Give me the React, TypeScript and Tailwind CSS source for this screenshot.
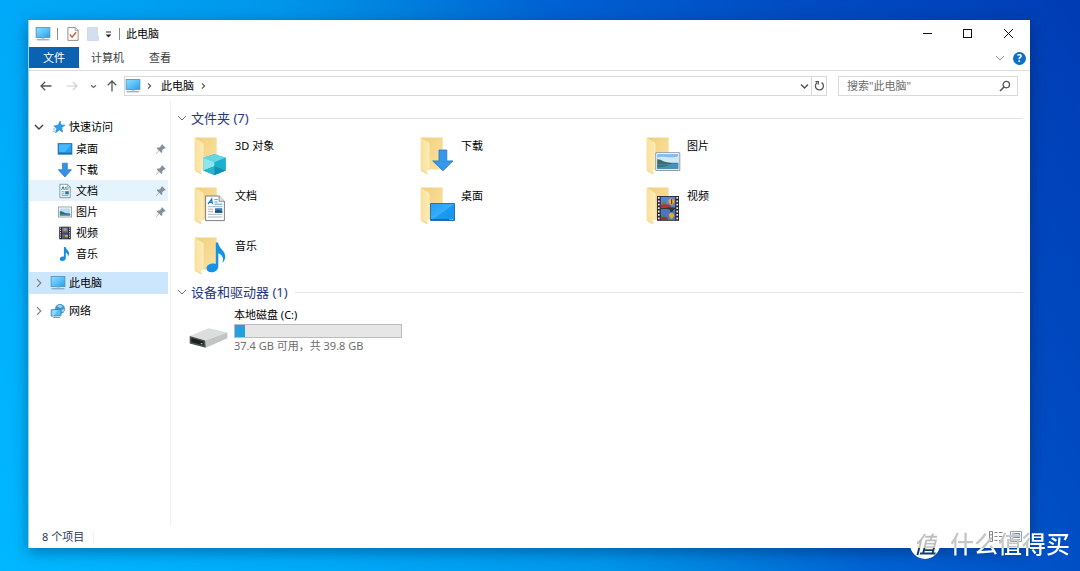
import type { ReactNode } from "react";

/* ---------- icons ---------- */

function MonitorIcon() {
  return (
    <svg width="16" height="14" viewBox="0 0 16 14" aria-hidden="true">
      <defs>
        <linearGradient id="screen" x1="0" y1="0" x2="1" y2="1">
          <stop offset="0" stopColor="#8fdcff" />
          <stop offset="0.5" stopColor="#5cc2f8" />
          <stop offset="1" stopColor="#2b9ee8" />
        </linearGradient>
      </defs>
      <rect x="1.1" y="0.6" width="13.8" height="9.8" fill="url(#screen)" stroke="#4a8db8" strokeWidth="0.8" />
      <path d="M6.5 10.8h3.4v.9H6.5z" fill="#9fb9c8" />
      <path d="M1.6 12.8h12.8" stroke="#7894a6" strokeWidth="1" />
    </svg>
  );
}

function StarIcon() {
  return (
    <svg width="14" height="14" viewBox="0 0 14 14" aria-hidden="true">
      <path d="M8.2 1l.8 3.9 4 .3-3.3 2.4.8 4.4-3.2-2.1-3.7 2.9 1.2-4.3L2 6l4.1-.7z" fill="#2c9ceb" stroke="#1b7fca" strokeWidth="0.6" />
      <path d="M.8 9.2l2.6-.4M.6 11.8l2.8-1.2" stroke="#5cb4ef" strokeWidth="0.9" />
    </svg>
  );
}

function DesktopIcon() {
  return (
    <svg width="16" height="14" viewBox="0 0 16 14" aria-hidden="true">
      <rect x="1.2" y="1.7" width="13.6" height="10.4" fill="#27a0f3" stroke="#1468ad" />
      <path d="M2 2.2h12.2L8 10H2z" fill="#49b5fa" />
      <path d="M2 11.2h12.2" stroke="#145f9f" strokeWidth="0.9" />
    </svg>
  );
}

function DownloadIcon() {
  return (
    <svg width="16" height="16" viewBox="0 0 16 16" aria-hidden="true">
      <path d="M5.5 1.2h4.8v6.5h4.2L7.9 15 1.3 7.7h4.2z" fill="#3592e4" stroke="#2773bd" strokeWidth="0.7" />
    </svg>
  );
}

function DocumentIcon() {
  return (
    <svg width="16" height="16" viewBox="0 0 16 16" aria-hidden="true">
      <path d="M2.9 1.3h7.6l2.7 2.7v10.7H2.9z" fill="#fafcfd" stroke="#71828c" strokeWidth="0.8" />
      <path d="M10.3 1.3v2.9h2.9" fill="none" stroke="#71828c" strokeWidth="0.7" />
      <path d="M4.6 7l1.5-3.4L7.3 7M8 4.4h1.5M8 6h3.6" stroke="#1c83b9" fill="none" />
      <path d="M4.5 8.8h3M4.5 10.8h3M4.5 12.7h7" stroke="#4d9bbd" strokeWidth="0.9" />
      <path d="M8.2 8.2h3.6v3.2H8.2z" fill="#267a9e" />
    </svg>
  );
}

function PictureIcon() {
  return (
    <svg width="16" height="14" viewBox="0 0 16 14" aria-hidden="true">
      <rect x="1.4" y="2" width="13.2" height="10" fill="#fff" stroke="#858e96" strokeWidth="0.8" />
      <path d="M2.8 3.4h10.4v7.2H2.8z" fill="#b9dcf3" />
      <path d="M2.8 6l3 .8 2.3 1.3 5.1.4v2.1H2.8z" fill="#346c74" />
      <path d="M2.8 9.4h10.4v1.2H2.8z" fill="#4f91bf" />
    </svg>
  );
}

function VideoIcon() {
  return (
    <svg width="16" height="16" viewBox="0 0 16 16" aria-hidden="true">
      <path d="M2.2 1.7h11.6v12.6H2.2z" fill="#292a31" />
      <path d="M5 2.5h6v5.2H5z" fill="#5577b1" />
      <path d="M5 8.4h6v5.2H5z" fill="#466294" />
      <path d="M3.5 2.5v11M12.5 2.5v11" stroke="#d9dce3" strokeWidth="1" strokeDasharray="1.2 1.1" />
      <path d="M6.5 3.5h3v2h-3zM8 10h3v2H8z" fill="#d1a83c" />
      <path d="M5 6.5h2.6v1.2H5zM5 11.7h3V13H5z" fill="#a3463a" />
    </svg>
  );
}

function MusicIcon() {
  return (
    <svg width="16" height="16" viewBox="0 0 16 16" aria-hidden="true">
      <path d="M6.9 1h1.7c.3 2.4 3.8 3.6 3.4 7-.1 1.2-.6 2-1.2 2.7.3-2.1-.4-3.3-2-4v5.6c0 3.2-6 3.9-6 .7 0-2.1 2.2-3 4.1-2.4z" fill="#178fe1" />
    </svg>
  );
}

function NetworkIcon() {
  return (
    <svg width="16" height="16" viewBox="0 0 16 16" aria-hidden="true">
      <circle cx="10" cy="6" r="5" fill="#4596c8" />
      <path d="M7 3.2c2-2 4.5-1.4 5.8.3L10.3 5 8.6 4.2zM11 7l3.6-1.2-.9 2.7-2 .8z" fill="#a1d4e8" />
      <path d="M1.2 6.8l9.8-.6v6.6l-9.8.3z" fill="#54bdf4" stroke="#267fb8" strokeWidth="0.8" />
      <path d="M1.8 7.4l6-.4L4 12.4l-2.2.1z" fill="#8bdafc" />
      <path d="M3.3 14.5h6.6" stroke="#5f91ad" strokeWidth="0.9" />
    </svg>
  );
}

function PinIcon() {
  return (
    <svg width="12" height="12" viewBox="0 0 12 12" aria-hidden="true">
      <path d="M7.1 1.2l3.7 3.7-1 .6-.7-.1-1.9 1.9.1 1.9-.9.7-2.2-2.2L1.2 11l-.4-.3 3-3.2-2.1-2.1.8-.9 1.9.1 1.9-1.9-.1-.7z" fill="#84919b" />
    </svg>
  );
}

function Chevron({ direction, className }: { direction: "down" | "right"; className: string }) {
  return (
    <svg width="10" height="10" viewBox="0 0 10 10" fill="none" stroke="currentColor" className={className} aria-hidden="true">
      <path d={direction === "down" ? "M1 3l4 4 4-4" : "M3 1.2L6.8 5 3 8.8"} />
    </svg>
  );
}

/* A folder with a picture of its content laid over the lower right corner. */
function FolderIcon({ children }: { children: ReactNode }) {
  return (
    <svg width="38" height="42" viewBox="0 0 38 42" className="shrink-0" aria-hidden="true">
      <defs>
        <linearGradient id="folderBack" x1="0" y1="0" x2="1" y2="1">
          <stop offset="0" stopColor="#f0cf7c" />
          <stop offset="1" stopColor="#fbe3a2" />
        </linearGradient>
        <linearGradient id="folderFront" x1="0" y1="0" x2="1" y2="0">
          <stop offset="0" stopColor="#f9e09a" />
          <stop offset="1" stopColor="#fdebb8" />
        </linearGradient>
        <linearGradient id="blueScreen" x1="0" y1="0" x2="1" y2="1">
          <stop offset="0" stopColor="#22a0f4" />
          <stop offset="0.5" stopColor="#39adfa" />
          <stop offset="0.52" stopColor="#199bf3" />
          <stop offset="1" stopColor="#1594ee" />
        </linearGradient>
      </defs>
      <path d="M2 1.4h21.7v32.2H7z" fill="url(#folderBack)" />
      <path d="M1.6 1.8l8 4.6q.9.5.9 1.6v23q0 1.2-1.4 1.5l-.7.2v5.6L2.4 35q-.8-.5-.8-1.4z" fill="url(#folderFront)" />
      <path d="M1.8 33.7l6.6 3.8v.9L2.4 35z" fill="#efd285" />
      {children}
    </svg>
  );
}

const overlays = {
  objects: (
    <>
      <path d="M21.5 18l11.2 3.8v12.6L21.5 39l-11.1-4.6V21.8z" fill="#2cc0d7" />
      <path d="M21.5 18l11.2 3.8-11.2 4.4-11.1-4.4z" fill="#64d6e4" />
      <path d="M10.4 21.8l11.1 4.4V39l-11.1-4.6z" fill="#8be7ec" />
      <path d="M21.5 26.2l11.2-4.4v12.6L21.5 39z" fill="#1cb0cd" />
      <path d="M10.4 34.4l11.1-4.2 11.2 4.2L21.5 39z" fill="#0b91b4" />
      <path d="M10.4 34.4l11.1-4.2V39z" fill="#29b4cb" />
    </>
  ),
  download: <path d="M20 14h7.8v10.9H34L23.9 34.8 13.7 24.9H20z" fill="#3698ea" stroke="#2877c2" strokeWidth="0.8" />,
  picture: (
    <>
      <path d="M10.8 16.7h24v17.8h-24z" fill="#fff" stroke="#8391a0" strokeWidth="0.9" />
      <path d="M12.2 18.1h21.2v15H12.2z" fill="#7fbdee" />
      <path d="M12.2 21.5c5-2 12 1.5 21.2-1.3v6.2H12.2z" fill="#cee8f6" />
      <path d="M12.2 23.2l3.3.5 3.4 1.7 4.2 1.2 4.7.6 5.6.1v1.3H12.2z" fill="#3b6e69" />
      <path d="M12.2 28.2h21.2v4.9H12.2z" fill="#4790b8" />
      <path d="M12.2 28.4h13.3l-6 2.3-7.3.7z" fill="#3c7771" />
    </>
  ),
  document: (
    <>
      <path d="M12.6 10h13.6l5.2 5.2v19.4H12.6z" fill="#fff" stroke="#6b737a" strokeWidth="0.9" />
      <path d="M26.1 10v5.3h5.3" fill="#e5eaee" stroke="#6b737a" strokeWidth="0.8" />
      <path d="M15 18.2l3.7-5.3.7 5.3M16.1 16.4h3.2" fill="none" stroke="#167abf" strokeWidth="1.2" />
      <path d="M21.5 13.6h3.2M21.5 16h3.2M21.5 18.2h7.8" stroke="#47a1d0" strokeWidth="1" />
      <path d="M14.8 20.7h14.5M14.8 23.2h5.4M14.8 25.7h5.4M14.8 28.3h14.5M14.8 31h14.5" stroke="#9fadb7" strokeWidth="0.9" />
      <path d="M22 22.2h7.3v4.6H22z" fill="#3180c0" />
      <path d="M22 25l3-1.2 4.3 1.7v1.3H22z" fill="#28515c" />
    </>
  ),
  desktop: (
    <>
      <path d="M11.5 17.5h24v17h-24z" fill="url(#blueScreen)" stroke="#2269a3" strokeWidth="0.9" />
      <path d="M12 33.6h23" stroke="#1668a7" strokeWidth="1.2" />
      <path d="M30.5 33.4h1M32.5 33.4h1.6" stroke="#d8efff" strokeWidth="0.9" />
    </>
  ),
  video: (
    <>
      <path d="M12 10h22v24.8H12z" fill="#25262d" />
      <path d="M15.7 10.8h14.6v11H15.7z" fill="#5b84cf" />
      <path d="M15.7 22.8h14.6v11.2H15.7z" fill="#4d74bd" />
      <path d="M13.8 11v23M32.2 11v23" stroke="#f0f1f4" strokeWidth="1.7" strokeDasharray="1.8 1.6" />
      <path d="M23.4 15.2c0-3.6 6-3.6 6 0 0 1.7-1.4 2.5-2.2 3.9h-1.6c-.4-1.4-2.2-2.2-2.2-3.9z" fill="#e3b22d" />
      <path d="M26 12.9h1.2v5.4H26z" fill="#8c2f22" />
      <path d="M17 16.6l2.4-1.8 1.6 2v2H17z" fill="#419258" />
      <path d="M15.7 18.7l5-.8 5 1.6v2.3h-10z" fill="#b33233" />
      <path d="M21.7 21.4h7.6v1.7L27 26h-1.6l-.5-2.3-3.2-1z" fill="#2d3a2b" />
      <path d="M23.8 29.3c0-3.4 5.4-3.4 5.4 0 0 1.6-1.4 2.3-2 3.5h-1.5c-.4-1.2-1.9-1.9-1.9-3.5z" fill="#dfac30" />
      <path d="M15.7 31h5l2.1 1.3V34h-7.1z" fill="#8c3936" />
      <path d="M16 29.4h4v1.8h-4z" fill="#3b8550" />
    </>
  ),
  music: (
    <path d="M22.8 6.5h2.4c.2 5.6 7.2 8.2 7 14.2 0 2.4-1.2 4.5-2.7 6.3 1.3-4.5.2-8.2-4.2-9.8V30c0 4-3.3 6.3-6.8 6.3-3 0-5-1.6-5-4 0-3.4 4.6-5.9 9.3-4.4z" fill="#1392e6" />
  ),
};

function DriveIcon() {
  return (
    <svg width="40" height="22" viewBox="0 0 40 22" className="shrink-0" aria-hidden="true">
      <path d="M.7 9L19 1.4q1-.4 2 0l17.4 4.2-22.2 8z" fill="#dcdddd" />
      <path d="M16.2 13.6l22.2-8v5.6l-21.6 9.6z" fill="#c3c4c5" />
      <path d="M.7 9l15.5 4.6.6 7.2L.7 16.4z" fill="#4b4f4f" />
      <path d="M2.3 11l12.3 3.6v4L2.3 15z" fill="#1d2020" />
      <path d="M11.8 16.4l1.8.5" stroke="#55cf77" strokeWidth="1.1" />
    </svg>
  );
}

/* ---------- data ---------- */

const quickAccess = [
  { label: "桌面", icon: <DesktopIcon />, pinned: true, hovered: false },
  { label: "下载", icon: <DownloadIcon />, pinned: true, hovered: false },
  { label: "文档", icon: <DocumentIcon />, pinned: true, hovered: true },
  { label: "图片", icon: <PictureIcon />, pinned: true, hovered: false },
  { label: "视频", icon: <VideoIcon />, pinned: false, hovered: false },
  { label: "音乐", icon: <MusicIcon />, pinned: false, hovered: false },
];

const folders = [
  { label: "3D 对象", overlay: overlays.objects },
  { label: "下载", overlay: overlays.download },
  { label: "图片", overlay: overlays.picture },
  { label: "文档", overlay: overlays.document },
  { label: "桌面", overlay: overlays.desktop },
  { label: "视频", overlay: overlays.video },
  { label: "音乐", overlay: overlays.music },
];

/* ---------- window parts ---------- */

function TitleBar() {
  return (
    <header className="flex h-[27px] items-center pl-[6px]">
      <MonitorIcon />
      <span className="ml-[6px] h-3 w-px bg-[#8c8c8c]" />
      <button type="button" aria-label="属性" className="ml-[9px]">
        <svg width="12" height="14" viewBox="0 0 12 14" aria-hidden="true">
          <path d="M.9.6h7.4l2.8 2.8v10H.9z" fill="#fff" stroke="#858585" strokeWidth="0.9" />
          <path d="M8.2.6v3h2.9" fill="none" stroke="#858585" strokeWidth="0.7" />
          <path d="M2.8 7.6l2.3 2.6 4-5" fill="none" stroke="#da5b36" strokeWidth="1.5" />
        </svg>
      </button>
      <button type="button" aria-label="新建文件夹" className="ml-2">
        <svg width="12" height="14" viewBox="0 0 12 14" aria-hidden="true">
          <path d="M.5.5h10v8.5l1 .5v4H.5z" fill="#d3def1" stroke="#c0cee8" strokeWidth="0.6" />
        </svg>
      </button>
      <button type="button" aria-label="自定义快速访问工具栏" className="ml-[6px]">
        <svg width="7" height="8" viewBox="0 0 7 8" aria-hidden="true">
          <path d="M1 2h5" stroke="#222" />
          <path d="M.6 4.4h5.8L3.5 7.4z" fill="#222" />
        </svg>
      </button>
      <span className="ml-[7px] h-3 w-px bg-[#8c8c8c]" />
      <h1 className="ml-[6px] text-black">此电脑</h1>
      <div className="ml-auto flex h-full items-stretch pr-px text-[#111]">
        <button type="button" aria-label="最小化" className="flex w-10 items-center justify-center">
          <svg width="11" height="11" viewBox="0 0 11 11" stroke="currentColor" aria-hidden="true"><path d="M1 5.5h9" /></svg>
        </button>
        <button type="button" aria-label="最大化" className="flex w-10 items-center justify-center">
          <svg width="11" height="11" viewBox="0 0 11 11" fill="none" stroke="currentColor" aria-hidden="true"><rect x="1.5" y="1.5" width="8" height="8" /></svg>
        </button>
        <button type="button" aria-label="关闭" className="flex w-[42px] items-center justify-center">
          <svg width="11" height="11" viewBox="0 0 11 11" stroke="currentColor" aria-hidden="true"><path d="M1 1l9 9M10 1l-9 9" /></svg>
        </button>
      </div>
    </header>
  );
}

function RibbonTabs() {
  return (
    <div className="flex h-6 items-start border-b border-[#dcdcdc] text-[#3c3c3c]">
      <button type="button" className="h-[21px] w-[50px] bg-[#0a62b1] text-white">文件</button>
      <button type="button" className="ml-3 h-[21px]">计算机</button>
      <button type="button" className="ml-[25px] h-[21px]">查看</button>
      <button type="button" aria-label="展开功能区" className="mt-[6px] ml-auto text-[#9a9a9a]">
        <Chevron direction="down" className="" />
      </button>
      <button type="button" aria-label="帮助" className="mt-[5px] mr-1 ml-2 size-[13px] rounded-full bg-[#0d6fc6] text-[10px] leading-[13px] font-bold text-white">
        ?
      </button>
    </div>
  );
}

function AddressBar() {
  return (
    <div className="flex h-[30px] items-center pr-3 pl-[10px] text-[#555]">
      <button type="button" aria-label="后退">
        <svg width="14" height="14" viewBox="0 0 14 14" fill="none" stroke="#555" strokeWidth="1.3" aria-hidden="true"><path d="M12.5 7H2M6.2 2.8L2 7l4.2 4.2" /></svg>
      </button>
      <button type="button" aria-label="前进" className="ml-3">
        <svg width="14" height="14" viewBox="0 0 14 14" fill="none" stroke="#cfcfcf" strokeWidth="1.2" aria-hidden="true"><path d="M1.5 7H12M7.8 2.8L12 7l-4.2 4.2" /></svg>
      </button>
      <button type="button" aria-label="最近浏览的位置" className="ml-[11px]">
        <svg width="7" height="7" viewBox="0 0 7 7" fill="none" stroke="#666" strokeWidth="1.2" aria-hidden="true"><path d="M1 2.2l2.5 2.3L6 2.2" /></svg>
      </button>
      <button type="button" aria-label="向上" className="ml-2">
        <svg width="14" height="14" viewBox="0 0 14 14" fill="none" stroke="#555" strokeWidth="1.3" aria-hidden="true"><path d="M7 12.5V2M2.8 6.2L7 2l4.2 4.2" /></svg>
      </button>
      <div className="ml-[5px] flex h-5 flex-1 items-center border border-[#d9d9d9]">
        <span className="mr-[5px]"><MonitorIcon /></span>
        <svg width="7" height="8" viewBox="0 0 7 8" fill="none" stroke="currentColor" strokeWidth="1.2" aria-hidden="true"><path d="M2 1.4L4.6 4 2 6.6" /></svg>
        <button type="button" className="ml-2 text-black">此电脑</button>
        <svg width="7" height="8" viewBox="0 0 7 8" fill="none" stroke="currentColor" strokeWidth="1.2" className="ml-[6px]" aria-hidden="true"><path d="M2 1.4L4.6 4 2 6.6" /></svg>
        <button type="button" aria-label="以前的位置" className="mr-[2px] ml-auto">
          <svg width="9" height="10" viewBox="0 0 9 10" fill="none" stroke="currentColor" strokeWidth="1.5" aria-hidden="true"><path d="M1 3.5L4.5 7 8 3.5" /></svg>
        </button>
        <button type="button" aria-label="刷新" className="flex h-full w-[15px] items-center justify-center border-l border-[#d9d9d9]">
          <svg width="11" height="12" viewBox="0 0 11 12" fill="none" stroke="currentColor" strokeWidth="1.3" aria-hidden="true">
            <path d="M7.6 2.6a4 4 0 1 1-4.6.2M1.4 1.6h2.9v2.9" />
          </svg>
        </button>
      </div>
      <label className="ml-[11px] flex h-5 w-[180px] items-center border border-[#d9d9d9] pr-[6px] pl-2">
        <input
          type="search"
          aria-label="搜索此电脑"
          placeholder={'搜索"此电脑"'}
          className="min-w-0 flex-1 bg-transparent outline-none placeholder:text-[#6d6d6d]"
        />
        <svg width="12" height="12" viewBox="0 0 12 12" fill="none" stroke="currentColor" strokeWidth="1.3" aria-hidden="true">
          <circle cx="7.3" cy="4.6" r="3.2" />
          <path d="M5 7l-4 4" strokeWidth="1.6" />
        </svg>
      </label>
    </div>
  );
}

function Sidebar() {
  return (
    <nav aria-label="导航窗格" className="w-[142px] shrink-0 border-r border-[#efefef] pt-[15px] pr-[2px] text-black">
      <a href="#quick" className="flex h-[22px] items-center pl-[5px]">
        <Chevron direction="down" className="text-[#404040] stroke-[1.4]" />
        <span className="mr-[3px] ml-2"><StarIcon /></span>
        快速访问
      </a>
      <ul>
        {quickAccess.map((item) => (
          <li key={item.label}>
            <a
              href={`#${item.label}`}
              className={`flex h-[21px] items-center pr-[1px] pl-7 ${item.hovered ? "bg-[#e5f3fc]" : ""}`}
            >
              <span className="mr-[3px]">{item.icon}</span>
              {item.label}
              {item.pinned && <span className="ml-auto"><PinIcon /></span>}
            </a>
          </li>
        ))}
      </ul>
      <a href="#computer" className="mt-2 flex h-[22px] items-center bg-[#cce6fe] pl-[5px]">
        <Chevron direction="right" className="text-[#808080] stroke-[1.2]" />
        <span className="mr-[3px] ml-[6px]"><MonitorIcon /></span>
        此电脑
      </a>
      <a href="#network" className="mt-[6px] flex h-[22px] items-center pl-[5px]">
        <Chevron direction="right" className="text-[#808080] stroke-[1.2]" />
        <span className="mr-[3px] ml-[6px]"><NetworkIcon /></span>
        网络
      </a>
    </nav>
  );
}

function GroupHeader({ title }: { title: string }) {
  return (
    <h2 className="flex h-5 items-center text-[13px] leading-5 text-[#26367f]">
      <Chevron direction="down" className="text-[#6f6f6f]" />
      <span className="ml-1">{title}</span>
      <span className="ml-[7px] h-px flex-1 bg-[#e4e4e4]" />
    </h2>
  );
}

function Content() {
  return (
    <main className="flex-1 pt-[7px] pr-[7px] pl-[6px] text-black">
      <section>
        <GroupHeader title="文件夹 (7)" />
        <ul className="mt-2 grid grid-cols-[repeat(auto-fill,226px)] pl-4">
          {folders.map((folder) => (
            <li key={folder.label} className="h-[50px]">
              <a href={`#${folder.label}`} className="flex items-start">
                <FolderIcon>{folder.overlay}</FolderIcon>
                <span className="mt-[2px] ml-[4px]">{folder.label}</span>
              </a>
            </li>
          ))}
        </ul>
      </section>
      <section className="-mt-1">
        <GroupHeader title="设备和驱动器 (1)" />
        <a href="#disk" className="mt-[5px] ml-3 flex items-start">
          <span className="mt-5"><DriveIcon /></span>
          <span className="ml-[5px] flex flex-col">
            <span className="leading-4">本地磁盘 (C:)</span>
            <span role="meter" aria-label="已用空间" aria-valuemin={0} aria-valuemax={100} aria-valuenow={6} className="mt-px block h-[14px] w-[168px] border border-[#bcbcbc] bg-[#e6e6e6]">
              <span className="block h-full bg-[#26a0da]" style={{ width: "6%" }} />
            </span>
            <span className="leading-4 text-[#6d6d6d]">37.4 GB 可用，共 39.8 GB</span>
          </span>
        </a>
      </section>
    </main>
  );
}

function StatusBar() {
  return (
    <footer className="flex h-[22px] items-center pr-[7px] pb-px pl-[13px] text-[#2b3a55]">
      8 个项目
      <span className="ml-[9px] h-3 w-px bg-[#f0f0f0]" />
      <div className="ml-auto flex gap-[5px]">
        <button type="button" aria-label="详细信息">
          <svg width="16" height="13" viewBox="0 0 16 13" fill="none" stroke="#858585" aria-hidden="true">
            <path d="M1.5 1.5h3v10h-3zM1.5 4.8h3M1.5 8.2h3" />
            <path d="M6.5 2.5h3M11 2.5h3.5M6.5 6.5h3M11 6.5h3.5M6.5 10.5h3M11 10.5h3.5" />
          </svg>
        </button>
        <button type="button" aria-label="大图标">
          <svg width="14" height="13" viewBox="0 0 14 13" fill="none" aria-hidden="true">
            <path d="M1.5 1.5h11v10h-11z" fill="#fff" stroke="#8ba3c4" />
            <path d="M3.5 3.5h7v4h-7z" fill="#c6dcf7" stroke="#5c91d4" />
            <path d="M3 9.5h8" stroke="#999" />
          </svg>
        </button>
      </div>
    </footer>
  );
}

function Watermark() {
  return (
    <div className="pointer-events-none absolute right-[10px] bottom-3 flex items-center gap-[10px]">
      <span className="flex size-[30px] items-center justify-center rounded-full bg-white">
        <span className="bg-[linear-gradient(#bdbdbd_62%,#0f3c66_62%)] bg-clip-text text-[23px] leading-[30px] font-medium text-transparent italic">值</span>
      </span>
      <span className="bg-white bg-[linear-gradient(#c6c6c6,#c6c6c6)] bg-[length:80px_64%] bg-clip-text bg-no-repeat text-[24px] leading-[30px] font-medium text-transparent">
        什么值得买
      </span>
    </div>
  );
}

export default function App() {
  return (
    <div className="relative flex min-h-screen bg-[linear-gradient(60deg,#00b8ff_0%,#00a8f8_25%,#0096ea_43%,#0084e0_50%,#0062d2_62%,#004cc2_79%,#003cb4_100%)] pt-5 pr-[50px] pb-[23px] pl-7 font-['Noto_Sans','Noto_Sans_CJK_SC',sans-serif] text-[11px] leading-4">
      <div className="flex flex-1 flex-col border-l border-[#8fd6f6] bg-white shadow-[0_4px_14px_rgba(0,20,60,0.4)]">
        <TitleBar />
        <RibbonTabs />
        <AddressBar />
        <div className="flex flex-1">
          <Sidebar />
          <Content />
        </div>
        <StatusBar />
      </div>
      <Watermark />
    </div>
  );
}
